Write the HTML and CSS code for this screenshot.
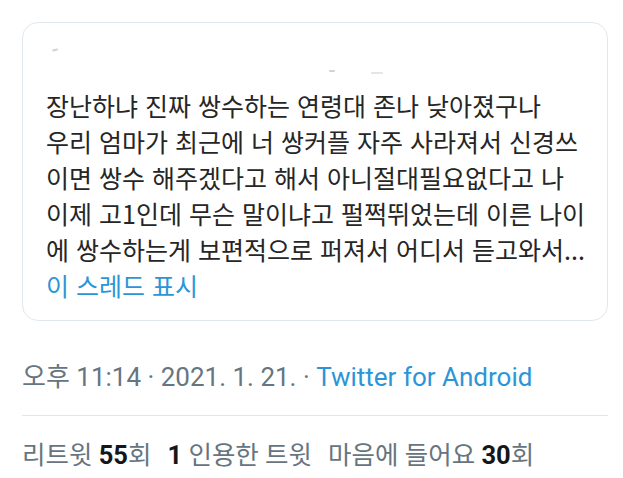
FILE: index.html
```html
<!doctype html>
<html lang="ko">
  <head>
    <meta charset="UTF-8" />
    <meta name="viewport" content="width=device-width, initial-scale=1.0" />
    <title>트윗</title>
    <link rel="stylesheet" href="styles.css">
  </head>
  <body>
    <main class="tweet">
      <article class="quote">
        <header class="quote-head">
          <span class="smudge smudge-a"></span>
          <span class="smudge smudge-b"></span>
          <span class="smudge smudge-c"></span>
        </header>
        <p class="quote-text">
          장난하냐 진짜 쌍수하는 연령대 존나 낮아졌구나<br />
          우리 엄마가 최근에 너 쌍커플 자주 사라져서 신경쓰<br />
          이면 쌍수 해주겠다고 해서 아니절대필요없다고 나<br />
          이제 고1인데 무슨 말이냐고 펄쩍뛰었는데 이른 나이<br />
          에 쌍수하는게 보편적으로 퍼져서 어디서 듣고와서...
        </p>
        <a class="thread-link" href="#">이 스레드 표시</a>
      </article>

      <div class="meta">
        오후 11:14 · 2021. 1. 21. · <a href="#">Twitter for Android</a>
      </div>

      <div class="stats">
        <span>리트윗 <b>55</b>회</span>
        <span><b>1</b> 인용한 트윗</span>
        <span>마음에 들어요 <b>30</b>회</span>
      </div>
    </main>
  </body>
</html>
```

FILE: styles.css
```css
* {
  box-sizing: border-box;
}

html,
body {
  margin: 0;
  background: #fff;
  font-family: Roboto, "Noto Sans CJK KR", sans-serif;
}

.tweet {
  padding: 22px 15px 0 22px;
}

.quote {
  border: 1px solid #e1e8ed;
  border-radius: 16px;
  padding: 0 23px 13px;
}

.quote-head {
  position: relative;
  height: 64px;
}

.smudge {
  position: absolute;
  height: 2px;
  border-radius: 2px;
  background: #b8c0c8;
  opacity: 0.7;
}

.smudge-a {
  left: 6px;
  top: 26px;
  width: 6px;
  transform: rotate(-12deg);
}

.smudge-b {
  left: 283px;
  top: 47px;
  width: 6px;
}

.smudge-c {
  left: 325px;
  top: 49px;
  width: 12px;
  background: #d5dbe0;
}

.quote-text {
  margin: 0;
  font-family: "Noto Sans CJK KR", sans-serif;
  font-size: 25px;
  line-height: 36px;
  color: #262626;
  white-space: nowrap;
}

.thread-link {
  display: block;
  font-family: "Noto Sans CJK KR", sans-serif;
  font-size: 25px;
  line-height: 36px;
  color: #2b95d8;
  text-decoration: none;
  margin-bottom: 4px;
}

.meta {
  margin-top: 38px;
  padding-bottom: 20px;
  border-bottom: 1px solid #e1e8ed;
  font-size: 26px;
  line-height: 36px;
  color: #66757f;
}

.meta a {
  color: #2b95d8;
  text-decoration: none;
}

.stats {
  display: flex;
  gap: 16px;
  padding-top: 21px;
  font-size: 25.5px;
  line-height: 36px;
  color: #66757f;
}

.stats b {
  color: #14171a;
  font-weight: 700;
}
```
